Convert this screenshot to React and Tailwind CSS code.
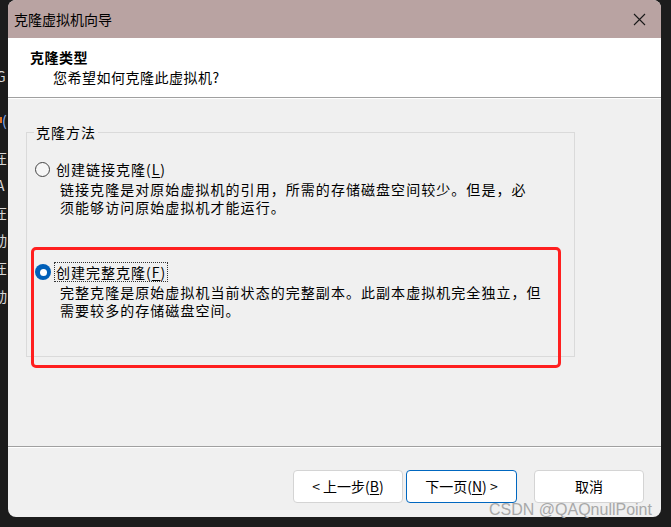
import React from "react";

const cjk = { fontFamily: '"Noto Sans CJK SC", "Noto Sans", sans-serif' };

function Key({ k }) {
  return (
    <>
      (<span className="underline underline-offset-2">{k}</span>)
    </>
  );
}

function Radio({ checked }) {
  if (checked) {
    return (
      <span className="w-[16px] h-[16px] rounded-full bg-[#005fb8] flex items-center justify-center shrink-0">
        <span className="w-[7px] h-[7px] rounded-full bg-white" />
      </span>
    );
  }
  return <span className="w-[15px] h-[15px] rounded-full border border-[#444] bg-[#f6f6f6] shrink-0" />;
}

function Button({ children, primary }) {
  return (
    <button
      className={
        primary
          ? "h-[33px] w-[111px] rounded-[4px] border border-[#0067c0] bg-white text-[14px] text-black"
          : "h-[33px] w-[110px] rounded-[4px] border border-[#d4d4d4] bg-white text-[14px] text-black"
      }
    >
      {children}
    </button>
  );
}

export default function App() {
  return (
    <div className="relative w-[671px] h-[527px] bg-[#1c1c1c] overflow-hidden flex" style={cjk}>
      {/* bits of the window behind */}
      <div className="w-[8px] overflow-hidden text-[14px] leading-[20px] text-[#d8d8d8]">
        <div className="mt-[66px] -ml-[4px]">G</div>
        <div className="mt-[24px] -ml-[1px] flex items-center">
          <span className="w-[3px] h-[6px] bg-[#e07020]" />
          <span className="text-[#8ab4f8]">(</span>
        </div>
        <div className="mt-[17px] -ml-[7px]">在</div>
        <div className="mt-[8px] -ml-[4px]">A</div>
        <div className="mt-[7px] -ml-[7px]">在</div>
        <div className="mt-[8px] -ml-[7px]">动</div>
        <div className="mt-[7px] -ml-[7px]">在</div>
        <div className="mt-[9px] -ml-[7px]">动</div>
      </div>

      {/* dialog */}
      <div className="w-[653px] h-[517px] bg-[#f0f0f0] rounded-[8px] overflow-hidden flex flex-col">
        <div className="h-[38px] bg-[#b9a3a2] flex items-center justify-between pl-[6px] pr-[15px]">
          <span className="text-[14px] text-black">克隆虚拟机向导</span>
          <svg width="13" height="13" viewBox="0 0 13 13">
            <path d="M1 1 L12 12 M12 1 L1 12" stroke="#1a1a1a" strokeWidth="1.1" />
          </svg>
        </div>

        <div className="h-[59px] bg-white pt-[9px]">
          <div className="pl-[22px] text-[14px] leading-[20px] font-bold tracking-[0.5px] text-black">克隆类型</div>
          <div className="pl-[45px] text-[14px] leading-[20px] tracking-[0.5px] text-black">您希望如何克隆此虚拟机?</div>
        </div>
        <div className="h-[1px] bg-[#a0a0a0]" />
        <div className="h-[1px] bg-white" />

        <div className="flex-1 flex flex-col">
          <fieldset className="mt-[23px] ml-[18px] w-[549px] h-[235px] border border-[#dadada]">
            <legend className="ml-[7px] px-[2px] text-[14px] leading-[20px] tracking-[1px] text-black">克隆方法</legend>

            <div className="mt-[17px] pl-[8px] flex items-center h-[20px]">
              <Radio />
              <span className="ml-[5px] px-[1px] text-[14px] leading-[20px] tracking-[1px] text-black">
                创建链接克隆<Key k="L" />
              </span>
            </div>
            <div className="pl-[33px] mt-[1px] text-[14px] leading-[18px] tracking-[1.05px] text-black">
              <div>链接克隆是对原始虚拟机的引用，所需的存储磁盘空间较少。但是，必</div>
              <div>须能够访问原始虚拟机才能运行。</div>
            </div>

            <div className="mt-[46px] pl-[8px] flex items-center h-[20px]">
              <Radio checked />
              <span className="ml-[3px] px-[1px] border border-dotted border-[#333] text-[14px] leading-[18px] tracking-[1px] text-black">
                创建完整克隆<Key k="F" />
              </span>
            </div>
            <div className="pl-[33px] mt-[1px] text-[14px] leading-[18px] tracking-[1.05px] text-black">
              <div>完整克隆是原始虚拟机当前状态的完整副本。此副本虚拟机完全独立，但</div>
              <div>需要较多的存储磁盘空间。</div>
            </div>
          </fieldset>

          <div className="mt-[89px] h-[1px] bg-[#a0a0a0]" />
          <div className="h-[1px] bg-white" />

          <div className="mt-[22px] flex pl-[285px]">
            <Button>
              &lt; 上一步<Key k="B" />
            </Button>
            <div className="ml-[3px]">
              <Button primary>
                下一页<Key k="N" /> &gt;
              </Button>
            </div>
            <div className="ml-[17px]">
              <Button>取消</Button>
            </div>
          </div>
        </div>
      </div>

      {/* annotation */}
      <div className="absolute left-[31px] top-[247px] w-[530px] h-[121px] border-[3px] border-[#ff1f1f] rounded-[5px]" />
      <div
        className="absolute left-[489px] top-[499px] text-[16px] leading-[22px] text-[#a8a8a8]"
        style={{ fontFamily: '"Liberation Sans", Arial, sans-serif' }}
      >
        CSDN @QAQnullPoint
      </div>
    </div>
  );
}
